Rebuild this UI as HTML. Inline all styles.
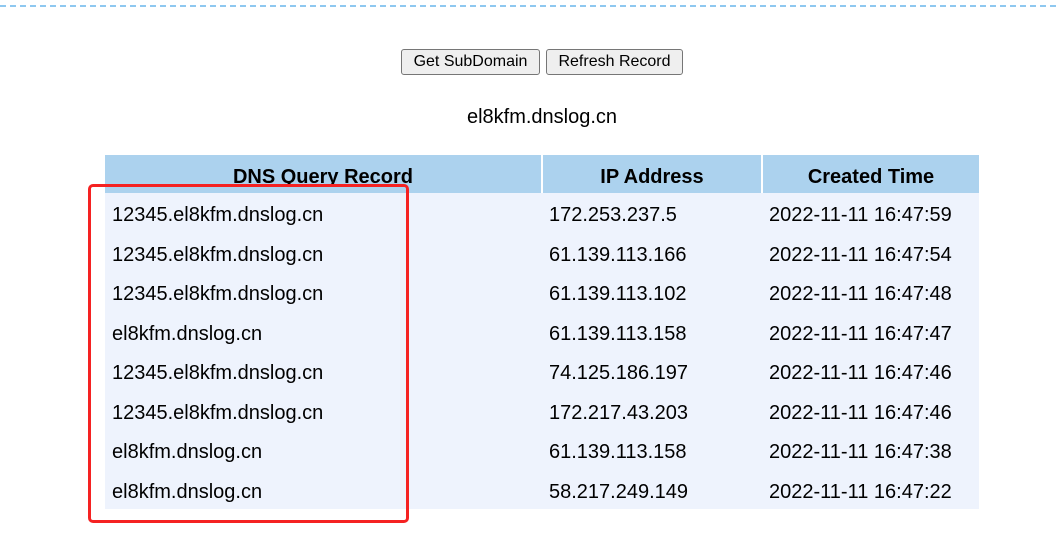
<!DOCTYPE html>
<html><head><meta charset="utf-8"><style>
body{margin:0;width:1056px;height:558px;background:#fff;position:relative;overflow:hidden;font-family:"Liberation Sans","DejaVu Sans",sans-serif;color:#000}
.dash{position:absolute;left:0;top:5px;width:1056px;border-top:2px dashed #8ec8f0}
.btn{position:absolute;top:49px;height:26px;box-sizing:border-box;border:1px solid #767676;border-radius:3px;background:#efefef;font-size:16px;line-height:24px;text-align:center}
.dom{position:absolute;top:106px;left:0;width:1084px;text-align:center;font-size:20px}
table{position:absolute;left:105px;top:155px;border-collapse:collapse;width:874px;font-size:20px}
th{background:#acd2ee;height:38px;font-weight:bold;padding:0;border-right:2px solid #fff}
th:last-child{border-right:none}
td{background:#eef3fd;height:39.5px;padding:0 0 0 7px}
td span,th span{position:relative;top:3px}
.red{position:absolute;left:88px;top:184px;width:321px;height:339px;box-sizing:border-box;border:3px solid #f52222;border-radius:5px}
</style></head><body>
<div class="dash"></div>
<div class="btn" style="left:401px;width:139px">Get SubDomain</div>
<div class="btn" style="left:546px;width:137px">Refresh Record</div>
<div class="dom">el8kfm.dnslog.cn</div>
<table>
<tr><th style="width:436px"><span>DNS Query Record</span></th><th style="width:218px"><span>IP Address</span></th><th><span>Created Time</span></th></tr>
<tr><td><span>12345.el8kfm.dnslog.cn</span></td><td><span>172.253.237.5</span></td><td><span>2022-11-11 16:47:59</span></td></tr>
<tr><td><span>12345.el8kfm.dnslog.cn</span></td><td><span>61.139.113.166</span></td><td><span>2022-11-11 16:47:54</span></td></tr>
<tr><td><span>12345.el8kfm.dnslog.cn</span></td><td><span>61.139.113.102</span></td><td><span>2022-11-11 16:47:48</span></td></tr>
<tr><td><span>el8kfm.dnslog.cn</span></td><td><span>61.139.113.158</span></td><td><span>2022-11-11 16:47:47</span></td></tr>
<tr><td><span>12345.el8kfm.dnslog.cn</span></td><td><span>74.125.186.197</span></td><td><span>2022-11-11 16:47:46</span></td></tr>
<tr><td><span>12345.el8kfm.dnslog.cn</span></td><td><span>172.217.43.203</span></td><td><span>2022-11-11 16:47:46</span></td></tr>
<tr><td><span>el8kfm.dnslog.cn</span></td><td><span>61.139.113.158</span></td><td><span>2022-11-11 16:47:38</span></td></tr>
<tr><td><span>el8kfm.dnslog.cn</span></td><td><span>58.217.249.149</span></td><td><span>2022-11-11 16:47:22</span></td></tr>
</table>
<div class="red"></div>
</body></html>
